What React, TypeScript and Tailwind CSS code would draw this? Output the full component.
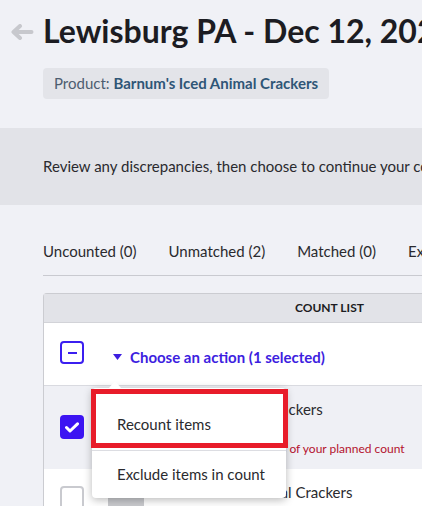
const font = { fontFamily: "Lato, 'Noto Sans', sans-serif" };

function CheckBox({ state }: { state: "none" | "some" | "all" }) {
  if (state === "all") {
    return (
      <div className="flex h-[24px] w-[24px] shrink-0 items-center justify-center rounded-[4px] bg-[#3c14f2]">
        <svg width="14" height="11" viewBox="0 0 14 11" fill="none">
          <path d="M1.5 5.5 L5 9 L12.5 1.8" stroke="white" strokeWidth="3" strokeLinecap="round" strokeLinejoin="round" />
        </svg>
      </div>
    );
  }
  if (state === "some") {
    return (
      <div className="flex h-[23px] w-[24px] shrink-0 items-center justify-center rounded-[4px] border-2 border-[#3b1ff0] bg-white">
        <div className="h-[2px] w-[9px] bg-[#3b1ff0]" />
      </div>
    );
  }
  return <div className="h-[24px] w-[24px] shrink-0 rounded-[4px] border-2 border-[#c9cacf] bg-white" />;
}

function Thumb() {
  return (
    <div className="flex h-[36px] w-[36px] shrink-0 items-end justify-center rounded-[2px] bg-[#c9cace]">
      <div className="h-[9px] w-[7px] bg-[#8b9ba0]" />
    </div>
  );
}

export default function App() {
  return (
    <div className="relative h-[506px] w-[422px] overflow-hidden bg-[#f0f1f6] text-[#2a2a2e]" style={font}>
      <div className="flex items-center whitespace-nowrap pl-[10px] pt-[11px]">
        <svg width="24" height="16" viewBox="0 0 24 16" fill="none" className="mt-[1px] shrink-0">
          <path d="M21.5 8 H4 M10 2 L3.5 8 L10 14" stroke="#c7c8cd" strokeWidth="4" strokeLinecap="round" strokeLinejoin="round" />
        </svg>
        <h1 className="ml-[9px] text-[32px] font-bold leading-[40px] text-[#1c1c22]">Lewisburg PA - Dec 12, 2023</h1>
      </div>

      <div className="ml-[43px] mt-[17px] inline-flex h-[31px] items-center whitespace-nowrap rounded-[4px] bg-[#e3e4e9] px-[11px] text-[15px] text-[#4d5d70]">
        Product:&nbsp;<span className="font-bold text-[#2f5677]">Barnum's Iced Animal Crackers</span>
      </div>

      <div className="mt-[29px] flex h-[77px] items-center whitespace-nowrap bg-[#e2e3e8] pl-[43px] text-[15px]">
        Review any discrepancies, then choose to continue your count or finalize it.
      </div>

      <div className="ml-[43px] mt-[34px] flex gap-[32px] whitespace-nowrap border-b border-[#c9cad0] pb-[12px] text-[15px] leading-[24px]">
        <span>Uncounted (0)</span>
        <span>Unmatched (2)</span>
        <span>Matched (0)</span>
        <span>Excluded (0)</span>
      </div>

      <div className="ml-[43px] mt-[17px] w-[600px] rounded-tl-[4px] border-l border-t border-[#cbccd1]">
        <div className="flex h-[29px] items-center border-b border-[#d2d3d8] bg-[#e2e3e8] pl-[251px] text-[12px] font-bold text-[#1c1c22]">
          COUNT LIST
        </div>

        <div className="flex h-[63px] items-start border-b border-[#d9dae0] bg-white pl-[16px]">
          <div className="mt-[18px]">
            <CheckBox state="some" />
          </div>
          <div className="ml-[29px] mt-[23px] flex items-center whitespace-nowrap text-[15px] font-bold leading-[22px] text-[#3d1ee0]">
            <svg width="9" height="6" viewBox="0 0 9 6" className="mr-[8px]">
              <path d="M0 0 H9 L4.5 6 Z" fill="#3d1ee0" />
            </svg>
            Choose an action (1 selected)
          </div>
        </div>

        <div className="flex h-[83px] items-start bg-[#eff0f5] pl-[16px]">
          <div className="mt-[29px]">
            <CheckBox state="all" />
          </div>
          <div className="ml-[24px] mt-[11px]">
            <Thumb />
          </div>
          <div className="ml-[38px] mt-[11px] whitespace-nowrap">
            <div className="text-[15px] leading-[24px]">Iced Animal&nbsp; Crackers</div>
            <div className="mt-[19px] text-[12px] leading-[18px] text-[#b4122e]">Quantity is at 150% of your planned count</div>
          </div>
        </div>

        <div className="flex h-[60px] items-start bg-white pl-[16px]">
          <div className="mt-[17px]">
            <CheckBox state="none" />
          </div>
          <div className="ml-[24px] mt-[11px]">
            <Thumb />
          </div>
          <div className="ml-[38px] mt-[11px] whitespace-nowrap text-[15px] leading-[24px]">Barnum's Animal Crackers</div>
        </div>
      </div>

      <div className="absolute left-[92px] top-[388px] w-[194px] rounded-[4px] bg-white text-[15px] shadow-[0_2px_8px_rgba(0,0,0,0.28)]">
        <div className="absolute -top-[7px] left-[17px] h-0 w-0 border-x-[6px] border-b-[7px] border-x-transparent border-b-white" />
        <div className="flex h-[62px] items-center pl-[25px] pt-[10px]">Recount items</div>
        <div className="flex h-[48px] items-center border-t border-[#dcdde2] pl-[25px]">Exclude items in count</div>
      </div>
      <div className="pointer-events-none absolute left-[91px] top-[389px] h-[59px] w-[197px] border-[5px] border-[#e81c2a]" />
    </div>
  );
}
